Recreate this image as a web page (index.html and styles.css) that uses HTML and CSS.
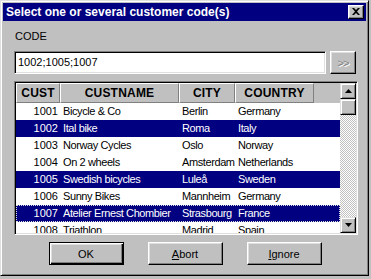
FILE: index.html
```html
<!DOCTYPE html>
<html lang="en">
<head>
  <meta charset="UTF-8">
  <meta name="viewport" content="width=device-width, initial-scale=1.0">
  <title>Select customer codes</title>
  <link rel="stylesheet" href="styles.css">
</head>
<body>
  <div class="window">
    <div class="titlebar">
      <span class="title">Select one or several customer code(s)</span>
      <button class="close" title="Close">
        <svg width="8" height="7" viewBox="0 0 8 7"><path d="M0 0h2l2 2 2-2h2L5 3.5 8 7H6L4 5 2 7H0l3-3.5z" fill="#000"/></svg>
      </button>
    </div>

    <div class="content">
      <div class="code-label">CODE</div>
      <div class="code-row">
        <div class="field">1002;1005;1007</div>
        <button class="more" disabled>&gt;&gt;</button>
      </div>

      <div class="grid">
        <div class="grid-main">
          <div class="row head">
            <div class="hcell">CUST</div>
            <div class="hcell">CUSTNAME</div>
            <div class="hcell">CITY</div>
            <div class="hcell">COUNTRY</div>
            <div class="hfill"></div>
          </div>
          <div class="row"><div class="num">1001</div><div>Bicycle &amp; Co</div><div>Berlin</div><div>Germany</div></div>
          <div class="row selected"><div class="num">1002</div><div>Ital bike</div><div>Roma</div><div>Italy</div></div>
          <div class="row"><div class="num">1003</div><div>Norway Cycles</div><div>Oslo</div><div>Norway</div></div>
          <div class="row"><div class="num">1004</div><div>On 2 wheels</div><div>Amsterdam</div><div>Netherlands</div></div>
          <div class="row selected"><div class="num">1005</div><div>Swedish bicycles</div><div>Luleå</div><div>Sweden</div></div>
          <div class="row"><div class="num">1006</div><div>Sunny Bikes</div><div>Mannheim</div><div>Germany</div></div>
          <div class="row selected focus"><div class="num">1007</div><div>Atelier Ernest Chombier</div><div>Strasbourg</div><div>France</div></div>
          <div class="row"><div class="num">1008</div><div>Triathlon</div><div>Madrid</div><div>Spain</div></div>
        </div>
        <div class="scrollbar">
          <div class="sbtn">
            <svg width="7" height="4" viewBox="0 0 7 4"><path d="M3.5 0L7 4H0z" fill="#000"/></svg>
          </div>
          <div class="thumb"></div>
          <div class="track"></div>
          <div class="sbtn">
            <svg width="7" height="4" viewBox="0 0 7 4"><path d="M0 0h7L3.5 4z" fill="#000"/></svg>
          </div>
        </div>
      </div>

      <div class="actions">
        <button class="btn default">OK</button>
        <button class="btn"><u>A</u>bort</button>
        <button class="btn"><u>I</u>gnore</button>
      </div>
    </div>
  </div>
</body>
</html>
```

FILE: styles.css
```css
* {
  box-sizing: border-box;
}
body {
  margin: 0;
  font-family: "Liberation Sans", Arial, sans-serif;
  font-size: 11px;
  color: #000;
  background-color: #c0c0c0;
}
button {
  font-family: inherit;
  font-size: inherit;
  color: inherit;
  margin: 0;
  padding: 0;
  background-color: #c0c0c0;
}

/* window frame */
.window {
  width: 369px;
  height: 276px;
  padding: 2px;
  background-color: #c0c0c0;
  border: 1px solid;
  border-color: #dfdfdf #000 #000 #dfdfdf;
  box-shadow: inset 1px 1px #fff, inset -1px -1px #808080;
  display: flex;
  flex-direction: column;
}
.titlebar {
  height: 18px;
  background-color: #000080;
  color: #fff;
  display: flex;
  align-items: center;
  justify-content: space-between;
  padding: 0 2px 0 3px;
}
.title {
  font-weight: bold;
  font-size: 12px;
}
.close {
  width: 16px;
  height: 14px;
  border: 1px solid;
  border-color: #fff #000 #000 #fff;
  box-shadow: inset -1px -1px #808080, inset 1px 1px #dfdfdf;
  display: flex;
  align-items: center;
  justify-content: center;
  padding-bottom: 1px;
}

.content {
  padding: 9px 8px 0 11px;
  display: flex;
  flex-direction: column;
}
.code-label {
  line-height: 13px;
  padding-left: 1px;
}
.code-row {
  display: flex;
  gap: 4px;
  margin-top: 8px;
  padding-right: 2px;
}
.field {
  flex-grow: 1;
  height: 23px;
  background-color: #fff;
  border: 1px solid;
  border-color: #808080 #fff #fff #808080;
  box-shadow: inset 1px 1px #000, inset -1px -1px #dfdfdf;
  padding: 0 3px;
  line-height: 21px;
}
.more {
  width: 26px;
  height: 23px;
  border: 1px solid;
  border-color: #fff #000 #000 #fff;
  box-shadow: inset -1px -1px #808080, inset 1px 1px #dfdfdf;
  color: #808080;
  text-shadow: 1px 1px #fff;
  letter-spacing: -1px;
}

/* customer grid */
.grid {
  margin-top: 7px;
  height: 154px;
  border: 1px solid;
  border-color: #808080 #fff #fff #808080;
  box-shadow: inset 1px 1px #000, inset -1px -1px #dfdfdf;
  padding: 1px;
  display: flex;
  background-color: #fff;
}
.grid-main {
  flex-grow: 1;
  overflow: hidden;
}
.row {
  display: grid;
  grid-template-columns: 44px 119px 56px 79px 1fr;
  height: 17px;
  line-height: 17px;
  white-space: nowrap;
  letter-spacing: -0.4px;
}
.row > div {
  padding-left: 3px;
  overflow: hidden;
}
.row > .num {
  text-align: right;
  padding: 0 2px 0 0;
  letter-spacing: 0;
}
.row.selected {
  background-color: #000080;
  color: #fff;
}
.row.focus {
  outline: 1px dotted #dfdfdf;
  outline-offset: -1px;
}
.row.head {
  height: 20px;
  line-height: 18px;
  background-color: #c0c0c0;
  letter-spacing: 0.2px;
}
.row.head > .hcell {
  padding: 0;
  text-align: center;
  font-weight: bold;
  font-size: 12px;
  border: 1px solid;
  border-color: #fff #808080 #808080 #fff;
}
.hfill {
  border-bottom: 1px solid #c0c0c0;
}

.scrollbar {
  width: 16px;
  display: flex;
  flex-direction: column;
}
.sbtn,
.thumb {
  height: 16px;
  background-color: #c0c0c0;
  border: 1px solid;
  border-color: #dfdfdf #000 #000 #dfdfdf;
  box-shadow: inset 1px 1px #fff, inset -1px -1px #808080;
  display: flex;
  align-items: center;
  justify-content: center;
}
.track {
  flex-grow: 1;
  background: repeating-conic-gradient(#c0c0c0 0 25%, #fff 0 50%) 0 0 / 2px 2px;
}

/* dialog buttons */
.actions {
  display: flex;
  justify-content: center;
  gap: 24px;
  margin-top: 7px;
  padding-right: 2px;
}
.btn {
  width: 75px;
  height: 23px;
  border: 1px solid;
  border-color: #fff #000 #000 #fff;
  box-shadow: inset -1px -1px #808080, inset 1px 1px #dfdfdf;
}
.btn.default {
  border: 1px solid #000;
  box-shadow: inset 1px 1px #fff, inset -1px -1px #000, inset -2px -2px #808080, inset 2px 2px #dfdfdf;
}
```
